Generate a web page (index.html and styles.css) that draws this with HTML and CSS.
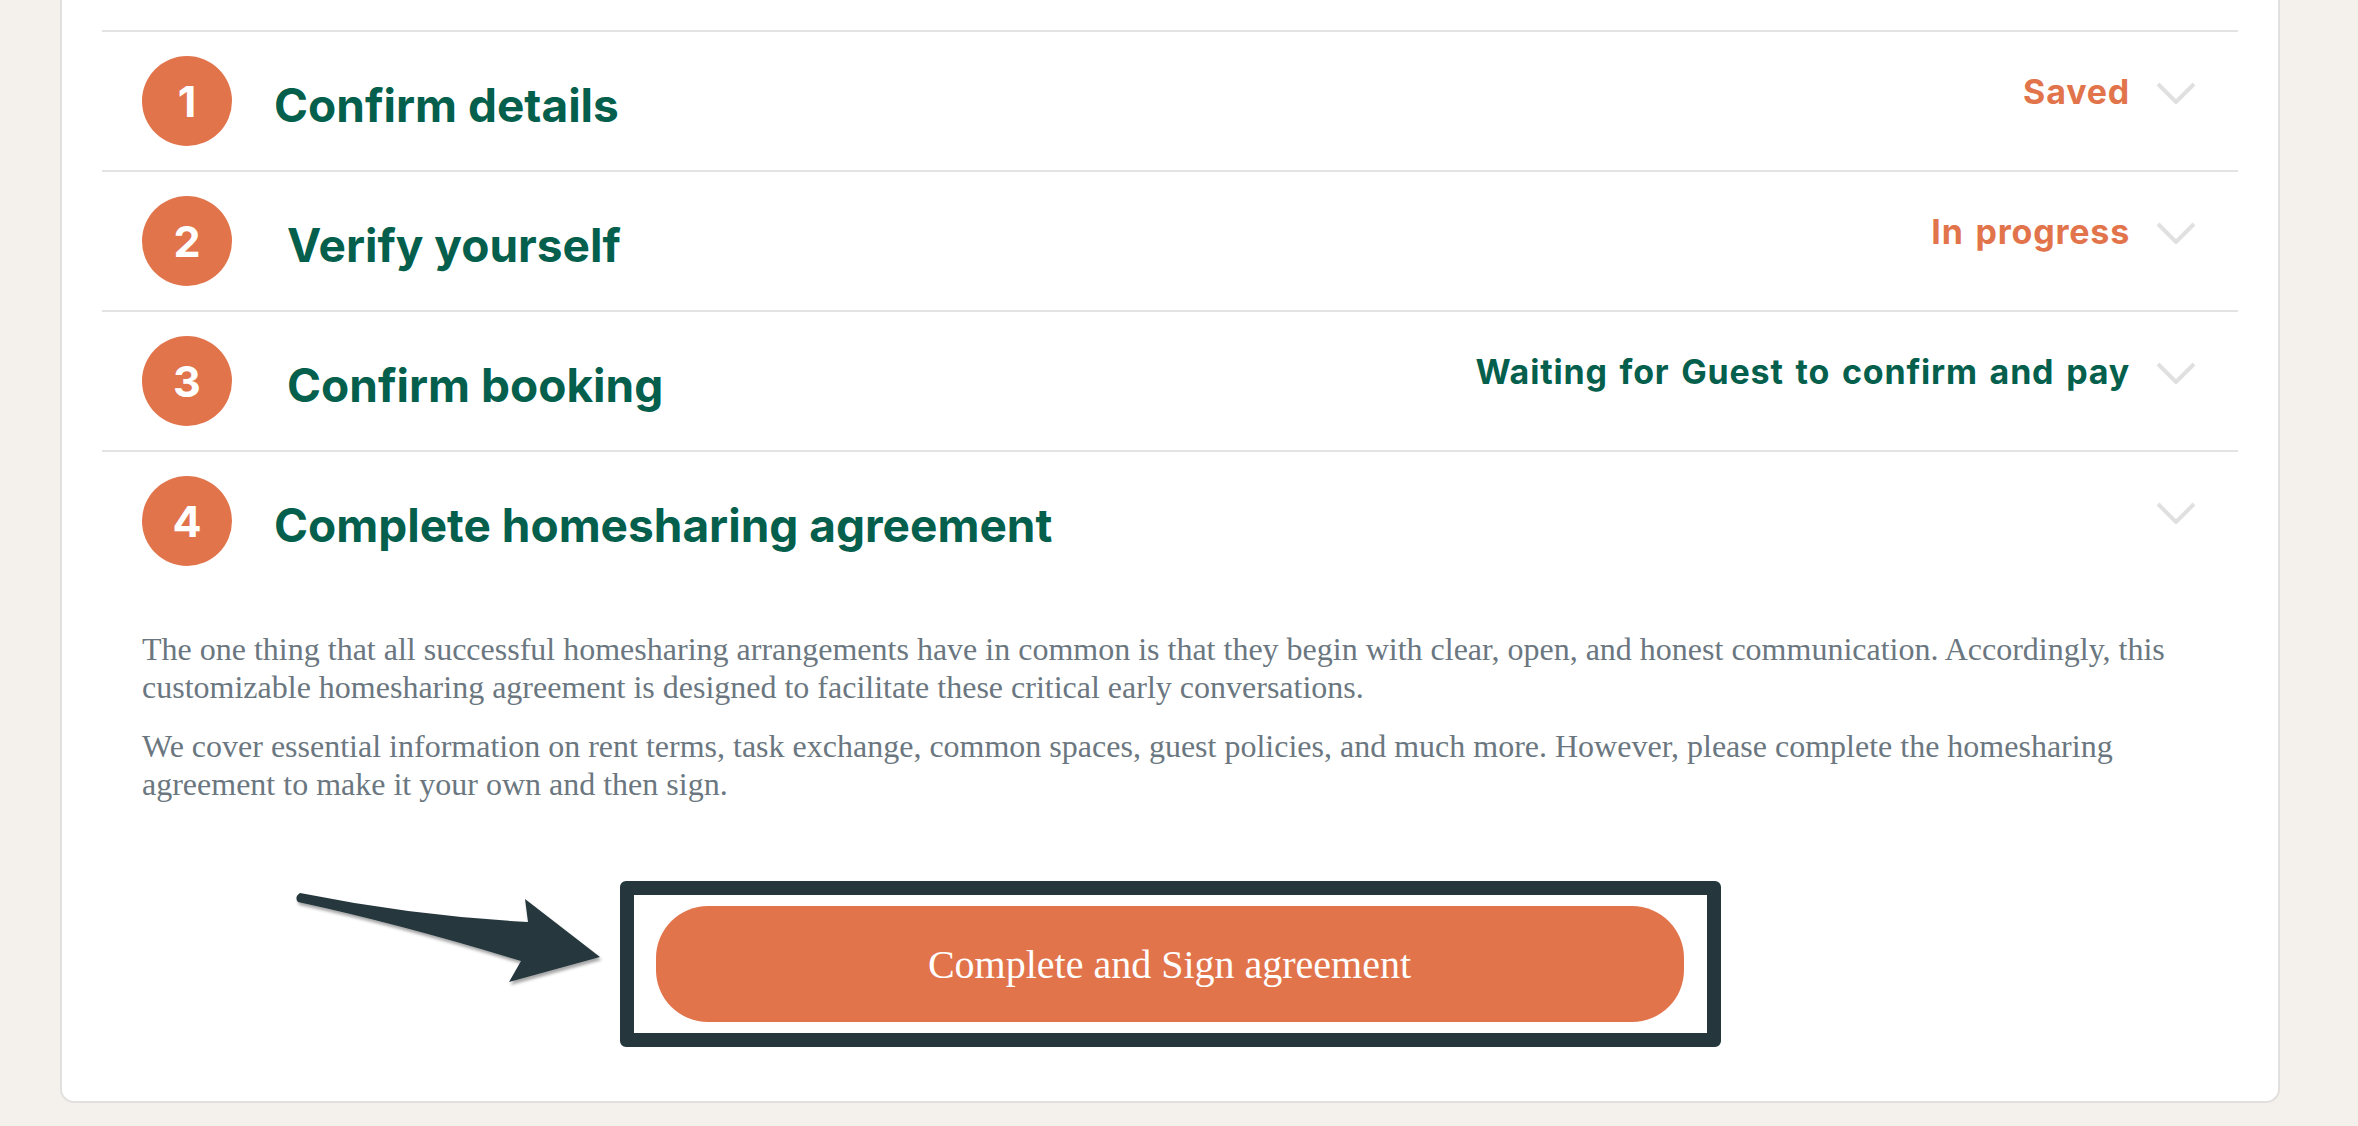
FILE: index.html
```html
<!DOCTYPE html>
<html lang="en">
<head>
<meta charset="utf-8">
<title>Homesharing steps</title>
<link rel="stylesheet" href="styles.css">
</head>
<body>
<div class="card">
  <div class="step">
    <div class="step-head">
      <span class="num">1</span>
      <span class="title">Confirm details</span>
      <div class="status-wrap">
        <span class="status orange">Saved</span>
        <svg class="chev" viewBox="0 0 40 22" width="40" height="22"><polyline points="2,2 20,20 38,2"/></svg>
      </div>
    </div>
  </div>
  <div class="step">
    <div class="step-head">
      <span class="num">2</span>
      <span class="title indent">Verify yourself</span>
      <div class="status-wrap">
        <span class="status orange">In progress</span>
        <svg class="chev" viewBox="0 0 40 22" width="40" height="22"><polyline points="2,2 20,20 38,2"/></svg>
      </div>
    </div>
  </div>
  <div class="step">
    <div class="step-head">
      <span class="num">3</span>
      <span class="title indent">Confirm booking</span>
      <div class="status-wrap">
        <span class="status green">Waiting for Guest to confirm and pay</span>
        <svg class="chev" viewBox="0 0 40 22" width="40" height="22"><polyline points="2,2 20,20 38,2"/></svg>
      </div>
    </div>
  </div>
  <div class="step open">
    <div class="step-head">
      <span class="num">4</span>
      <span class="title">Complete homesharing agreement</span>
      <div class="status-wrap">
        <svg class="chev" viewBox="0 0 40 22" width="40" height="22"><polyline points="2,2 20,20 38,2"/></svg>
      </div>
    </div>
    <div class="step-body">
      <p>The one thing that all successful homesharing arrangements have in common is that they begin with clear, open, and honest communication. Accordingly, this customizable homesharing agreement is designed to facilitate these critical early conversations.</p>
      <p>We cover essential information on rent terms, task exchange, common spaces, guest policies, and much more. However, please complete the homesharing agreement to make it your own and then sign.</p>
      <div class="cta">
        <svg class="arrow" viewBox="290 885 320 110" width="320" height="110">
          <defs>
            <filter id="sh" x="-10%" y="-10%" width="130%" height="140%">
              <feDropShadow dx="1.5" dy="3" stdDeviation="1.6" flood-color="#000" flood-opacity="0.35"/>
            </filter>
          </defs>
          <path filter="url(#sh)" d="M300,893 Q414,916 528,922 L525,899 L600,957 L509,982 L521,961 Q400,924 298,902 Q294,897 300,893 Z"/>
        </svg>
        <div class="frame">
          <button class="sign-btn" type="button">Complete and Sign agreement</button>
        </div>
      </div>
    </div>
  </div>
</div>
</body>
</html>
```

FILE: styles.css
```css
html, body {
  margin: 0;
  padding: 0;
}
body {
  background: #f4f0ec;
  width: 2358px;
  height: 1126px;
  overflow: hidden;
}
.card {
  box-sizing: border-box;
  margin-left: 60px;
  width: 2220px;
  background: #ffffff;
  border: 2px solid #e2e0de;
  border-top: none;
  border-radius: 0 0 14px 14px;
  padding: 30px 40px 54px 40px;
}
.step {
  border-top: 2px solid #e3e3e3;
}
.step-head {
  display: flex;
  align-items: center;
  height: 138px;
}
.num {
  flex: none;
  width: 90px;
  height: 90px;
  margin-left: 40px;
  border-radius: 50%;
  background: #e2744c;
  color: #ffffff;
  font-family: "Inter", "Liberation Sans", sans-serif;
  font-weight: 700;
  font-size: 43px;
  display: flex;
  align-items: center;
  justify-content: center;
}
.title {
  margin-left: 42px;
  margin-top: 8px;
  font-family: "Inter", "Liberation Sans", sans-serif;
  font-weight: 700;
  font-size: 46px;
  color: #04604c;
}
.title.indent {
  margin-left: 55px;
}
.status-wrap {
  margin-left: auto;
  margin-right: 42px;
  margin-bottom: 16px;
  display: flex;
  align-items: center;
  gap: 26px;
}
.status {
  font-family: "Inter", "Liberation Sans", sans-serif;
  font-weight: 700;
  font-size: 34px;
  letter-spacing: 0.8px;
  word-spacing: 3px;
  position: relative;
  top: -2px;
}
.status.orange { color: #e2744c; }
.status.green { color: #04604c; }
.chev {
  display: block;
  fill: none;
  stroke: #e0e0e0;
  stroke-width: 4;
}
.step-body {
  padding: 40px 40px 0 40px;
}
.step-body p {
  margin: 0 0 21px 0;
  font-family: "Liberation Serif", "Times New Roman", serif;
  font-size: 32px;
  line-height: 38px;
  color: #6b7780;
}
.cta {
  position: relative;
  margin-top: 78px;
  display: flex;
  justify-content: center;
  margin-left: -40px;
  margin-right: -40px;
}
.arrow {
  position: absolute;
  left: 188px;
  top: 4px;
  fill: #25373d;
  overflow: visible;
}
.frame {
  border: 14px solid #25373d;
  border-radius: 6px;
  padding: 11px 23px 11px 22px;
  background: #ffffff;
}
.sign-btn {
  display: block;
  width: 1028px;
  height: 116px;
  border: none;
  border-radius: 52px;
  background: #e2744c;
  color: #ffffff;
  font-family: "Liberation Serif", "Times New Roman", serif;
  font-size: 40px;
  padding: 0;
  cursor: pointer;
}
```
